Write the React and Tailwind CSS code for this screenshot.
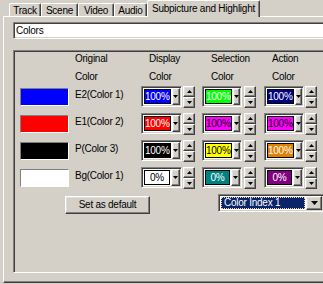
import React from 'react';

const raised =
  'border border-t-white border-l-white border-r-[#404040] border-b-[#404040] shadow-[inset_-1px_-1px_#808080,inset_1px_1px_#dfdfdf]';
const sunken =
  'border border-t-[#808080] border-l-[#808080] border-r-white border-b-white shadow-[inset_1px_1px_#404040,inset_-1px_-1px_#d4d0c8]';

const rows = [
  {
    swatch: 'bg-[#0000ff]',
    label: 'E2(Color 1)',
    cells: [
      { bg: 'bg-[#0000ff]', fg: 'text-white', t: '100%' },
      { bg: 'bg-[#00ff00]', fg: 'text-white', t: '100%' },
      { bg: 'bg-[#000080]', fg: 'text-white', t: '100%' },
    ],
  },
  {
    swatch: 'bg-[#ff0000]',
    label: 'E1(Color 2)',
    cells: [
      { bg: 'bg-[#ff0000]', fg: 'text-white', t: '100%' },
      { bg: 'bg-[#ff00ff]', fg: 'text-black', t: '100%' },
      { bg: 'bg-[#ff00ff]', fg: 'text-black', t: '100%' },
    ],
  },
  {
    swatch: 'bg-black',
    label: 'P(Color 3)',
    cells: [
      { bg: 'bg-black', fg: 'text-white', t: '100%' },
      { bg: 'bg-[#ffff00]', fg: 'text-black', t: '100%' },
      { bg: 'bg-[#e08000]', fg: 'text-white', t: '100%' },
    ],
  },
  {
    swatch: 'bg-white',
    label: 'Bg(Color 1)',
    cells: [
      { bg: 'bg-white', fg: 'text-black', t: '0%' },
      { bg: 'bg-[#008080]', fg: 'text-white', t: '0%' },
      { bg: 'bg-[#800080]', fg: 'text-white', t: '0%' },
    ],
  },
];

function Tri({ up = false }) {
  return (
    <svg width="5" height="3" viewBox="0 0 5 3" className="block">
      {up ? <path d="M2.5 0L5 3H0z" fill="black" /> : <path d="M0 0h5L2.5 3z" fill="black" />}
    </svg>
  );
}

function ColorCombo({ cell, width }) {
  return (
    <div className={`h-[21px] ${width} ${sunken} flex p-[1px] bg-white`}>
      <div className={`flex-1 ml-[1px] mt-[1px] mb-[1px] border border-black ${cell.bg} ${cell.fg} flex items-center justify-center text-[10px] leading-none tracking-tight`}>
        {cell.t}
      </div>
      <div className={`w-[9px] ml-[1px] bg-[#d4d0c8] ${raised} flex items-center justify-center`}>
        <Tri />
      </div>
    </div>
  );
}

function Spinner() {
  return (
    <div className="flex flex-col w-[12px] h-[22px]">
      <div className={`h-[11px] bg-[#d4d0c8] ${raised} flex items-center justify-center`}>
        <Tri up />
      </div>
      <div className={`h-[11px] bg-[#d4d0c8] ${raised} flex items-center justify-center`}>
        <Tri />
      </div>
    </div>
  );
}

function Tab({ label, w }) {
  return (
    <div className={`${w} h-[13px] border-t border-l border-r border-t-white border-l-white border-r-[#404040] rounded-t-[2px] shadow-[inset_-1px_0_#808080] flex items-center justify-center whitespace-nowrap pt-[1px]`}>
      {label}
    </div>
  );
}

export default function App() {
  return (
    <div
      className="w-[323px] h-[284px] bg-[#d4d0c8] overflow-hidden text-black text-[10px] leading-none tracking-tight"
      style={{ fontFamily: '"Liberation Sans", Arial, sans-serif' }}
    >
      {/* tab strip */}
      <div className="h-[16px] flex items-end pl-[9px]">
        <Tab label="Track" w="w-[32px]" />
        <Tab label="Scene" w="w-[37px]" />
        <Tab label="Video" w="w-[36px]" />
        <Tab label="Audio" w="w-[33px]" />
        <div className="relative z-10 w-[113px] h-[17px] -mb-[1px] bg-[#d4d0c8] border-t border-l border-r border-t-white border-l-white border-r-[#404040] rounded-t-[2px] shadow-[inset_-1px_0_#808080] flex items-start justify-center whitespace-nowrap pt-[3px]">
          Subpicture and Highlight
        </div>
      </div>

      {/* tab panel */}
      <div className="ml-[3px] w-[340px] h-[267px] border-t border-l border-b border-t-white border-l-white border-b-[#404040] shadow-[inset_0_-1px_#808080]">
        <div className={`ml-[9px] mt-[5px] h-[17px] w-[330px] bg-white ${sunken} flex items-center pl-[2px]`}>
          Colors
        </div>

        {/* group box */}
        <div className={`ml-[9px] mt-[11px] h-[223px] w-[330px] ${sunken}`}>
          <div className="pt-[1px]">
            <div className="flex h-[14px] items-center">
              <div className="w-[61px]" />
              <div className="w-[66px]">Original</div>
              <div className="w-[61px] pl-[8px]">Display</div>
              <div className="w-[62px] pl-[9px]">Selection</div>
              <div className="pl-[8px]">Action</div>
            </div>
            <div className="flex h-[17px] items-center pt-[5px]">
              <div className="w-[61px]" />
              <div className="w-[66px]">Color</div>
              <div className="w-[61px] pl-[8px]">Color</div>
              <div className="w-[62px] pl-[9px]">Color</div>
              <div className="pl-[8px]">Color</div>
            </div>
          </div>

          {rows.map((r) => (
            <div key={r.label} className="flex items-center h-[27px]">
              <div className="w-[61px] pl-[6px]">
                <div className={`w-[49px] h-[18px] border border-t-[#808080] border-l-[#808080] border-r-white border-b-white ${r.swatch}`} />
              </div>
              <div className="w-[66px] pb-[4px] whitespace-nowrap">{r.label}</div>
              <div className="w-[61px] flex items-center gap-[1px]">
                <ColorCombo cell={r.cells[0]} width="w-[41px]" />
                <Spinner />
              </div>
              <div className="w-[62px] flex items-center gap-[2px]">
                <ColorCombo cell={r.cells[1]} width="w-[40px]" />
                <Spinner />
              </div>
              <div className="flex items-center gap-[1px]">
                <ColorCombo cell={r.cells[2]} width="w-[40px]" />
                <Spinner />
              </div>
            </div>
          ))}

          <div className="flex items-start mt-[3px]">
            <button
              type="button"
              className={`ml-[51px] mt-[2px] w-[85px] h-[18px] bg-[#d4d0c8] ${raised} text-[10px] leading-none tracking-tight flex items-center justify-center`}
            >
              Set as default
            </button>
            <div className={`ml-[68px] w-[106px] h-[18px] bg-white ${sunken} flex p-[1px]`}>
              <div className="flex-1 ml-[1px] my-[1px] bg-[#0a246a] border border-dotted border-[#f0d890] text-white flex items-center pl-[2px]">
                Color Index 1
              </div>
              <div className={`w-[16px] ml-[1px] bg-[#d4d0c8] ${raised} flex items-center justify-center`}>
                <svg width="7" height="4" viewBox="0 0 7 4" className="block">
                  <path d="M0 0h7L3.5 4z" fill="black" />
                </svg>
              </div>
            </div>
          </div>
        </div>
      </div>
    </div>
  );
}
